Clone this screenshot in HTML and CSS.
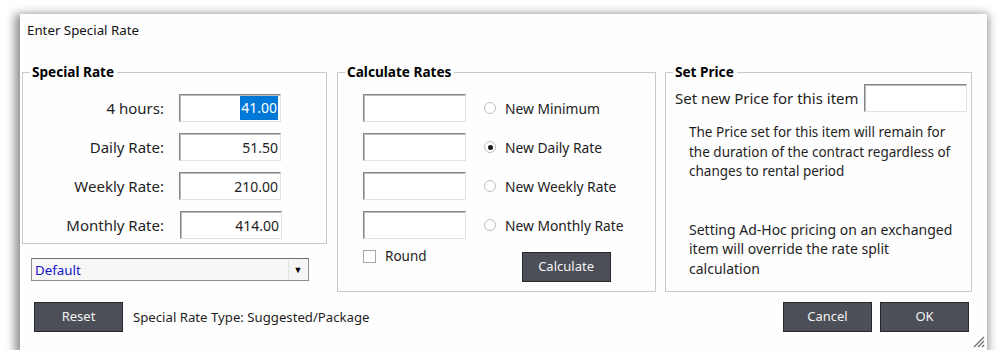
FILE: index.html
```html
<!DOCTYPE html>
<html>
<head>
<meta charset="utf-8">
<link rel="stylesheet" href="styles.css">
</head>
<body>
<div class="window">
  <div class="title">Enter Special Rate</div>
  <div class="groups">
    <div class="leftcol">
      <fieldset class="group g-special">
        <legend>Special Rate</legend>
        <div class="rows">
          <div class="row"><span class="lbl">4 hours:</span><span class="field sel"><span class="hl">41.00</span></span></div>
          <div class="row"><span class="lbl">Daily Rate:</span><span class="field">51.50</span></div>
          <div class="row"><span class="lbl">Weekly Rate:</span><span class="field">210.00</span></div>
          <div class="row"><span class="lbl">Monthly Rate:</span><span class="field shift">414.00</span></div>
        </div>
      </fieldset>
      <div class="combo"><span class="combo-text">Default</span><span class="combo-btn">&#9660;</span></div>
    </div>
    <fieldset class="group g-calc">
      <legend>Calculate Rates</legend>
      <div class="rows">
        <div class="row"><span class="field blank"></span><span class="radio"></span><span class="rlbl">New Minimum</span></div>
        <div class="row"><span class="field blank"></span><span class="radio on"></span><span class="rlbl">New Daily Rate</span></div>
        <div class="row"><span class="field blank"></span><span class="radio"></span><span class="rlbl">New Weekly Rate</span></div>
        <div class="row"><span class="field blank"></span><span class="radio"></span><span class="rlbl">New Monthly Rate</span></div>
      </div>
      <div class="calc-foot">
        <div class="check"><span class="box"></span><span>Round</span></div>
        <button class="btn calc">Calculate</button>
      </div>
    </fieldset>
    <fieldset class="group g-price">
      <legend>Set Price</legend>
      <div class="price-row"><span>Set new Price for this item</span><span class="field blank wide"></span></div>
      <p class="note first">The Price set for this item will remain for the duration of the contract regardless of changes to rental period</p>
      <p class="note second">Setting Ad-Hoc pricing on an exchanged item will override the rate split calculation</p>
    </fieldset>
  </div>
  <div class="footer">
    <button class="btn">Reset</button>
    <span class="rtype">Special Rate Type: Suggested/Package</span>
    <span class="spacer"></span>
    <button class="btn">Cancel</button>
    <button class="btn">OK</button>
  </div>
  <svg class="grip" width="14" height="14" viewBox="0 0 14 14"><path d="M13 3 L3 13 M13 7 L7 13 M13 11 L11 13" stroke="#6a6a6a" stroke-width="1.2"/></svg>
</div>
</body>
</html>
```
FILE: styles.css
```css
html, body { margin: 0; padding: 0; background: #ffffff; }
body {
  font-family: "Noto Sans", "Open Sans", sans-serif;
  font-size: 13.5px;
  color: #1e1e1e;
}
.window {
  position: relative;
  margin: 14px 0 0 20px;
  width: 967px;
  height: 336px;
  background: #fefefe;
  box-shadow: -2px 3px 9px 3px rgba(0,0,0,0.45);
  box-sizing: border-box;
}
.title {
  padding: 8px 0 0 7px;
  height: 24px;
  box-sizing: border-box;
  line-height: 16px;
  font-size: 13.3px;
  color: #111;
}
.groups {
  display: flex;
  margin-top: 26px;
  padding-left: 2px;
  align-items: flex-start;
}
.group {
  margin: 0;
  padding: 0;
  border: 1px solid #c9c9c9;
  min-width: 0;
  box-sizing: border-box;
}
.group legend {
  font-weight: bold;
  font-size: 13.6px;
  color: #000;
  padding: 0 3px 0 2px;
  margin-left: 7px;
  line-height: 16px;
}
.leftcol { width: 305px; }
.g-special { width: 305px; height: 180px; }
.g-calc { width: 319px; height: 228px; margin-left: 10px; }
.g-price { width: 307px; height: 228px; margin-left: 9px; }
.rows { display: flex; flex-direction: column; gap: 11px; padding-top: 14px; }
.row { display: flex; align-items: center; height: 28px; }
.lbl { width: 141px; text-align: right; margin-right: 15px; font-size: 15px; }
.field {
  display: inline-flex;
  align-items: center;
  justify-content: flex-end;
  width: 102px;
  height: 28px;
  box-sizing: border-box;
  border-top: 1px solid #858585;
  border-left: 1px solid #858585;
  border-right: 1px solid #e2e2e2;
  border-bottom: 1px solid #e2e2e2;
  box-shadow: inset 1px 1px 0 #bcbcbc;
  background: #fff;
  padding-right: 2px;
  font-size: 14px;
  overflow: hidden;
  white-space: nowrap;
}
.field.shift { margin-left: 1px; }
.hl { background: #0078d7; color: #fff; padding: 2px 1px; line-height: 20px; }
.g-calc .rows { padding-left: 25px; }
.g-calc .field { width: 103px; }
.radio {
  width: 12px; height: 12px; border-radius: 50%;
  border: 1px solid #bdbdbd;
  margin-left: 18px; margin-right: 9px;
  box-sizing: border-box;
  display: inline-flex; align-items: center; justify-content: center;
  background: #fff;
}
.radio.on::after { content: ""; width: 5px; height: 5px; border-radius: 50%; background: #1a1a1a; }
.rlbl { font-size: 13.8px; color: #222; }
.calc-foot { display: flex; align-items: flex-start; padding-left: 25px; margin-top: 7px; }
.check { display: flex; align-items: center; gap: 9px; font-size: 13.5px; margin-top: 1px; }
.box { width: 13px; height: 13px; box-sizing: border-box; border: 1px solid #a8a8a8; background: #fff; }
.btn {
  width: 89px; height: 30px;
  background: #4c4f57;
  border: 1px solid #26282c;
  color: #f2f2f2;
  font-family: "Noto Sans", "Open Sans", sans-serif;
  font-size: 13px;
  padding: 0 0 3px 0;
  box-sizing: border-box;
}
.btn.calc { margin-left: 95px; margin-top: 6px; }
.combo {
  display: flex; align-items: center;
  margin: 14px 0 0 9px;
  width: 278px; height: 23px;
  box-sizing: border-box;
  border: 1px solid #8b8b8b;
  border-top-color: #6e6e6e;
  background: #f7f7f7;
}
.combo-text { flex: 1; color: #1414c8; padding-left: 3px; font-size: 13.3px; }
.combo-btn {
  width: 18px; height: 19px; margin-right: 1px;
  display: flex; align-items: center; justify-content: center;
  font-size: 9px; color: #000; background: #f5f5f5;
  border-left: 1px solid #e0e0e0;
}
.price-row { display: flex; align-items: center; gap: 5px; padding: 4px 0 0 9px; font-size: 15px; }
.field.wide { width: 103px; }
.note { margin: 0; padding: 0 0 0 23px; width: 270px; font-size: 13.5px; line-height: 19.5px; }
.note.first { margin-top: 11px; }
.note.second { margin-top: 38px; font-size: 14px; width: 268px; }
.footer { display: flex; align-items: center; padding: 10px 18px 0 14px; }
.rtype { margin-left: 10px; font-size: 13.2px; }
.spacer { flex: 1; }
.footer .btn + .btn { margin-left: 8px; }
.grip { position: absolute; right: 2px; bottom: 2px; }
```
